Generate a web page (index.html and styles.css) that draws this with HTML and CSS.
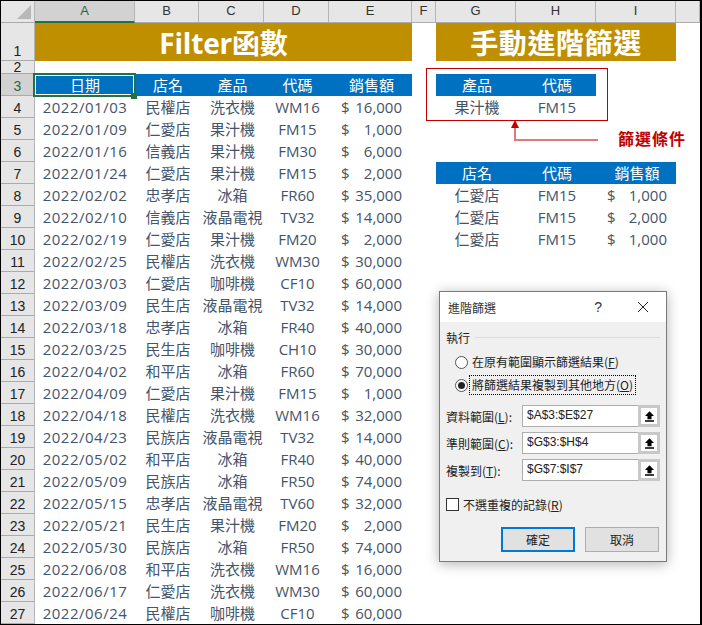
FILE: index.html
```html
<!DOCTYPE html>
<html lang="zh-Hant">
<head>
<meta charset="utf-8">
<title>Filter函數</title>
<link rel="stylesheet" href="styles.css">
</head>
<body>
<div class="frame">
<div class="sheet">
  <div class="corner"></div><div class="colh sel">A</div><div class="colh">B</div><div class="colh">C</div><div class="colh">D</div><div class="colh">E</div><div class="colh">F</div><div class="colh">G</div><div class="colh">H</div><div class="colh">I</div><div class="colh"></div>

  <div class="rowh">1</div><div class="c banner banner-a">Filter函數</div><div class="c banner banner-b">手動進階篩選</div>
  <div class="rowh short">2</div>
  <div class="rowh sel">3</div><div class="c head sel-cell">日期</div><div class="c head">店名</div><div class="c head">產品</div><div class="c head">代碼</div><div class="c head">銷售額</div><div class="c head g">產品</div><div class="c head">代碼</div>
  <div class="rowh">4</div><div class="c date">2022/01/03</div><div class="c">民權店</div><div class="c">洗衣機</div><div class="c">WM16</div><div class="c money"><span>$</span><span>16,000</span></div><div class="c g">果汁機</div><div class="c">FM15</div>
  <div class="rowh">5</div><div class="c date">2022/01/09</div><div class="c">仁愛店</div><div class="c">果汁機</div><div class="c">FM15</div><div class="c money"><span>$</span><span>1,000</span></div>
  <div class="rowh">6</div><div class="c date">2022/01/16</div><div class="c">信義店</div><div class="c">果汁機</div><div class="c">FM30</div><div class="c money"><span>$</span><span>6,000</span></div>
  <div class="rowh">7</div><div class="c date">2022/01/24</div><div class="c">仁愛店</div><div class="c">果汁機</div><div class="c">FM15</div><div class="c money"><span>$</span><span>2,000</span></div><div class="c head g">店名</div><div class="c head">代碼</div><div class="c head">銷售額</div>
  <div class="rowh">8</div><div class="c date">2022/02/02</div><div class="c">忠孝店</div><div class="c">冰箱</div><div class="c">FR60</div><div class="c money"><span>$</span><span>35,000</span></div><div class="c g">仁愛店</div><div class="c">FM15</div><div class="c money alt"><span>$</span><span>1,000</span></div>
  <div class="rowh">9</div><div class="c date">2022/02/10</div><div class="c">信義店</div><div class="c">液晶電視</div><div class="c">TV32</div><div class="c money"><span>$</span><span>14,000</span></div><div class="c g">仁愛店</div><div class="c">FM15</div><div class="c money alt"><span>$</span><span>2,000</span></div>
  <div class="rowh">10</div><div class="c date">2022/02/19</div><div class="c">仁愛店</div><div class="c">果汁機</div><div class="c">FM20</div><div class="c money"><span>$</span><span>2,000</span></div><div class="c g">仁愛店</div><div class="c">FM15</div><div class="c money alt"><span>$</span><span>1,000</span></div>
  <div class="rowh">11</div><div class="c date">2022/02/25</div><div class="c">民權店</div><div class="c">洗衣機</div><div class="c">WM30</div><div class="c money"><span>$</span><span>30,000</span></div>
  <div class="rowh">12</div><div class="c date">2022/03/03</div><div class="c">仁愛店</div><div class="c">咖啡機</div><div class="c">CF10</div><div class="c money"><span>$</span><span>60,000</span></div>
  <div class="rowh">13</div><div class="c date">2022/03/09</div><div class="c">民生店</div><div class="c">液晶電視</div><div class="c">TV32</div><div class="c money"><span>$</span><span>14,000</span></div>
  <div class="rowh">14</div><div class="c date">2022/03/18</div><div class="c">忠孝店</div><div class="c">冰箱</div><div class="c">FR40</div><div class="c money"><span>$</span><span>40,000</span></div>
  <div class="rowh">15</div><div class="c date">2022/03/25</div><div class="c">民生店</div><div class="c">咖啡機</div><div class="c">CH10</div><div class="c money"><span>$</span><span>30,000</span></div>
  <div class="rowh">16</div><div class="c date">2022/04/02</div><div class="c">和平店</div><div class="c">冰箱</div><div class="c">FR60</div><div class="c money"><span>$</span><span>70,000</span></div>
  <div class="rowh">17</div><div class="c date">2022/04/09</div><div class="c">仁愛店</div><div class="c">果汁機</div><div class="c">FM15</div><div class="c money"><span>$</span><span>1,000</span></div>
  <div class="rowh">18</div><div class="c date">2022/04/18</div><div class="c">民權店</div><div class="c">洗衣機</div><div class="c">WM16</div><div class="c money"><span>$</span><span>32,000</span></div>
  <div class="rowh">19</div><div class="c date">2022/04/23</div><div class="c">民族店</div><div class="c">液晶電視</div><div class="c">TV32</div><div class="c money"><span>$</span><span>14,000</span></div>
  <div class="rowh">20</div><div class="c date">2022/05/02</div><div class="c">和平店</div><div class="c">冰箱</div><div class="c">FR40</div><div class="c money"><span>$</span><span>40,000</span></div>
  <div class="rowh">21</div><div class="c date">2022/05/09</div><div class="c">民族店</div><div class="c">冰箱</div><div class="c">FR50</div><div class="c money"><span>$</span><span>74,000</span></div>
  <div class="rowh">22</div><div class="c date">2022/05/15</div><div class="c">忠孝店</div><div class="c">液晶電視</div><div class="c">TV60</div><div class="c money"><span>$</span><span>32,000</span></div>
  <div class="rowh">23</div><div class="c date">2022/05/21</div><div class="c">民生店</div><div class="c">果汁機</div><div class="c">FM20</div><div class="c money"><span>$</span><span>2,000</span></div>
  <div class="rowh">24</div><div class="c date">2022/05/30</div><div class="c">民族店</div><div class="c">冰箱</div><div class="c">FR50</div><div class="c money"><span>$</span><span>74,000</span></div>
  <div class="rowh">25</div><div class="c date">2022/06/08</div><div class="c">和平店</div><div class="c">洗衣機</div><div class="c">WM16</div><div class="c money"><span>$</span><span>16,000</span></div>
  <div class="rowh">26</div><div class="c date">2022/06/17</div><div class="c">仁愛店</div><div class="c">洗衣機</div><div class="c">WM30</div><div class="c money"><span>$</span><span>60,000</span></div>
  <div class="rowh">27</div><div class="c date">2022/06/24</div><div class="c">民權店</div><div class="c">咖啡機</div><div class="c">CF10</div><div class="c money"><span>$</span><span>60,000</span></div>
</div>

<div class="crit-box"></div>
<svg class="arrow" width="110" height="30" viewBox="0 0 110 30"><path class="arrow-line" d="M15 7V20H98"/><path class="arrow-head" d="M15 0L19 8H11Z"/></svg>
<div class="crit-label">篩選條件</div>

<div class="dialog">
  <div class="dlg-title"><span>進階篩選</span><span class="dlg-actions"><span class="q">?</span>
    <svg class="close" width="16" height="16" viewBox="0 0 16 16"><path d="M3 3L13 13M13 3L3 13"/></svg></span></div>
  <div class="dlg-body">
    <div class="group"><span>執行</span><i></i></div>
    <div class="radios">
      <div class="radio"><b class="dot"></b><span class="rlabel">在原有範圍顯示篩選結果(<u>F</u>)</span></div>
      <div class="radio on"><b class="dot"></b><span class="rlabel focus">將篩選結果複製到其他地方(<u>O</u>)</span></div>
    </div>
    <div class="fields">
      <div class="field"><label>資料範圍(<u>L</u>):</label><div class="input"><span>$A$3:$E$27</span><em><svg width="9" height="11" viewBox="0 0 11 13"><path d="M5.5 0L11 6H8V10H3V6H0ZM0 11H11V13H0Z"/></svg></em></div></div>
      <div class="field"><label>準則範圍(<u>C</u>):</label><div class="input"><span>$G$3:$H$4</span><em><svg width="9" height="11" viewBox="0 0 11 13"><path d="M5.5 0L11 6H8V10H3V6H0ZM0 11H11V13H0Z"/></svg></em></div></div>
      <div class="field"><label>複製到(<u>T</u>):</label><div class="input"><span>$G$7:$I$7</span><em><svg width="9" height="11" viewBox="0 0 11 13"><path d="M5.5 0L11 6H8V10H3V6H0ZM0 11H11V13H0Z"/></svg></em></div></div>
    </div>
    <div class="check"><b></b><span>不選重複的記錄(<u>R</u>)</span></div>
    <div class="btns"><button class="ok">確定</button><button>取消</button></div>
  </div>
</div>
</div>
</body>
</html>
```
FILE: styles.css
```css
*{box-sizing:border-box}
html,body{margin:0;padding:0;background:#fff}
body{width:702px;height:625px;overflow:hidden}
.frame{position:relative;width:702px;height:625px;border:1px solid #000;border-right-width:2px;overflow:hidden;font-family:"Liberation Sans","Noto Sans CJK TC",sans-serif}
.sheet{display:grid;grid-template-columns:34px 100px 64px 65px 65px 83px 24px 80px 80px 80px 24px;grid-template-rows:22px 38px 13px repeat(25,22px);color:#44546a;font-size:15px;font-family:"Open Sans","Noto Sans CJK TC",sans-serif}
.c{display:flex;align-items:center;justify-content:center;white-space:nowrap;line-height:1;padding:1px 0 0 2px}
.date{letter-spacing:.5px;padding-left:0}
.g{grid-column:8}
.colh{display:flex;align-items:center;justify-content:center;background:#e6e6e6;color:#333;font-size:13px;line-height:1;border-right:1px solid #b5b5b5;border-bottom:1px solid #ababab;font-family:"Liberation Sans",sans-serif;padding-bottom:3px}
.colh.sel{background:#d2d2d2;color:#1e6b41;border-bottom:2px solid #217346;padding-bottom:2px}
.corner{background:#e6e6e6;border-right:1px solid #b5b5b5;border-bottom:1px solid #ababab;position:relative}
.corner::after{content:"";position:absolute;right:3px;bottom:3px;border-style:solid;border-width:0 0 14px 14px;border-color:transparent transparent #b8b8b8}
.rowh{grid-column:1;display:flex;justify-content:center;align-items:flex-end;background:#e6e6e6;color:#222;font-size:14px;line-height:1;border-right:1px solid #b5b5b5;border-bottom:1px solid #ababab;font-family:"Liberation Sans",sans-serif;padding-bottom:2px}
.rowh.short{align-items:center;padding:0;line-height:12px}
.rowh.sel{background:#d2d2d2;color:#1e6b41}
.banner{background:#bf8f00;color:#fff;font-size:28px;font-weight:700;padding-left:0}
.banner-a{grid-column:2/7;letter-spacing:-.2px}
.banner-b{grid-column:8/11;letter-spacing:.6px}
.head{background:#0070c0;color:#fff}
.money{justify-content:space-between;padding:1px 10px 0 12px}
.money.alt{padding:1px 9px 0 11px}
.sel-cell{position:relative;padding-left:0}
.sel-cell::before{content:"";position:absolute;top:-1px;right:-1px;bottom:-1px;left:-2px;border:2px solid #217346;box-shadow:inset 0 0 0 1px #fff}
.sel-cell::after{content:"";position:absolute;right:-2px;bottom:-3px;width:6px;height:6px;background:#217346}
.crit-box{position:absolute;left:425px;top:67px;width:182px;height:53px;border:1px solid #c00000}
.arrow{position:absolute;left:499px;top:119px}
.arrow-line{fill:none;stroke:#e07a7a;stroke-width:2}
.arrow-head{fill:#c00000}
.crit-label{position:absolute;left:617px;top:129px;color:#c00000;font-size:16px;font-weight:700;letter-spacing:1px;line-height:20px}
.dialog{position:absolute;left:438px;top:290px;width:228px;height:271px;background:#f0f0f0;border:1px solid #7a7a7a;box-shadow:0 2px 12px rgba(0,0,0,.3);color:#222;font-size:12px;font-family:"Noto Sans CJK TC",sans-serif}
.dlg-title{height:30px;background:#fff;display:flex;justify-content:space-between;align-items:center;padding:0 15px 0 8px;color:#333}
.dlg-actions{display:flex;align-items:center;gap:33px}
.q{font-family:"Liberation Sans",sans-serif;font-size:14px}
.close{display:block}
.close path{stroke:#222;stroke-width:1;fill:none}
.dlg-body{padding:5px 6px 0 6px}
.group{display:flex;align-items:center;gap:5px;height:20px}
.group i{flex:1;height:1px;background:#dcdcdc}
.radios{padding:5px 0 0 9px;display:flex;flex-direction:column;gap:3px}
.radio{display:flex;align-items:center;gap:2px;height:20px;white-space:nowrap}
.dot{width:13px;height:13px;border-radius:50%;border:1px solid #555;background:#fff;flex:none;position:relative}
.on .dot::after{content:"";position:absolute;inset:2px;border-radius:50%;background:#222}
.rlabel{padding:0 2px;line-height:18px}
.focus{outline:1px dotted #000;outline-offset:0}
.fields{margin-top:10px;display:flex;flex-direction:column;gap:5px}
.field{display:flex;align-items:center;height:22px}
.field label{width:76px;white-space:nowrap}
.input{flex:1;height:22px;display:flex;background:#fff;border:1px solid #adadad;align-items:stretch;font-family:"Liberation Sans",sans-serif;font-size:12px}
.input span{flex:1;padding:0 4px;line-height:19px}
.input em{width:22px;background:#fff;border:3px solid #c8c8c8;display:flex;align-items:center;justify-content:center;margin:-1px}
.input svg{display:block}
.check{display:flex;align-items:center;gap:4px;margin-top:13px;height:20px}
.check b{width:13px;height:13px;background:#fff;border:1px solid #333;flex:none}
.btns{display:flex;gap:10px;justify-content:flex-end;margin-top:13px;padding-right:1px}
.btns button{width:74px;height:25px;background:#e1e1e1;border:1px solid #adadad;font:12px "Noto Sans CJK TC",sans-serif;color:#222;padding:0}
.btns .ok{border:2px solid #0078d7}
```
